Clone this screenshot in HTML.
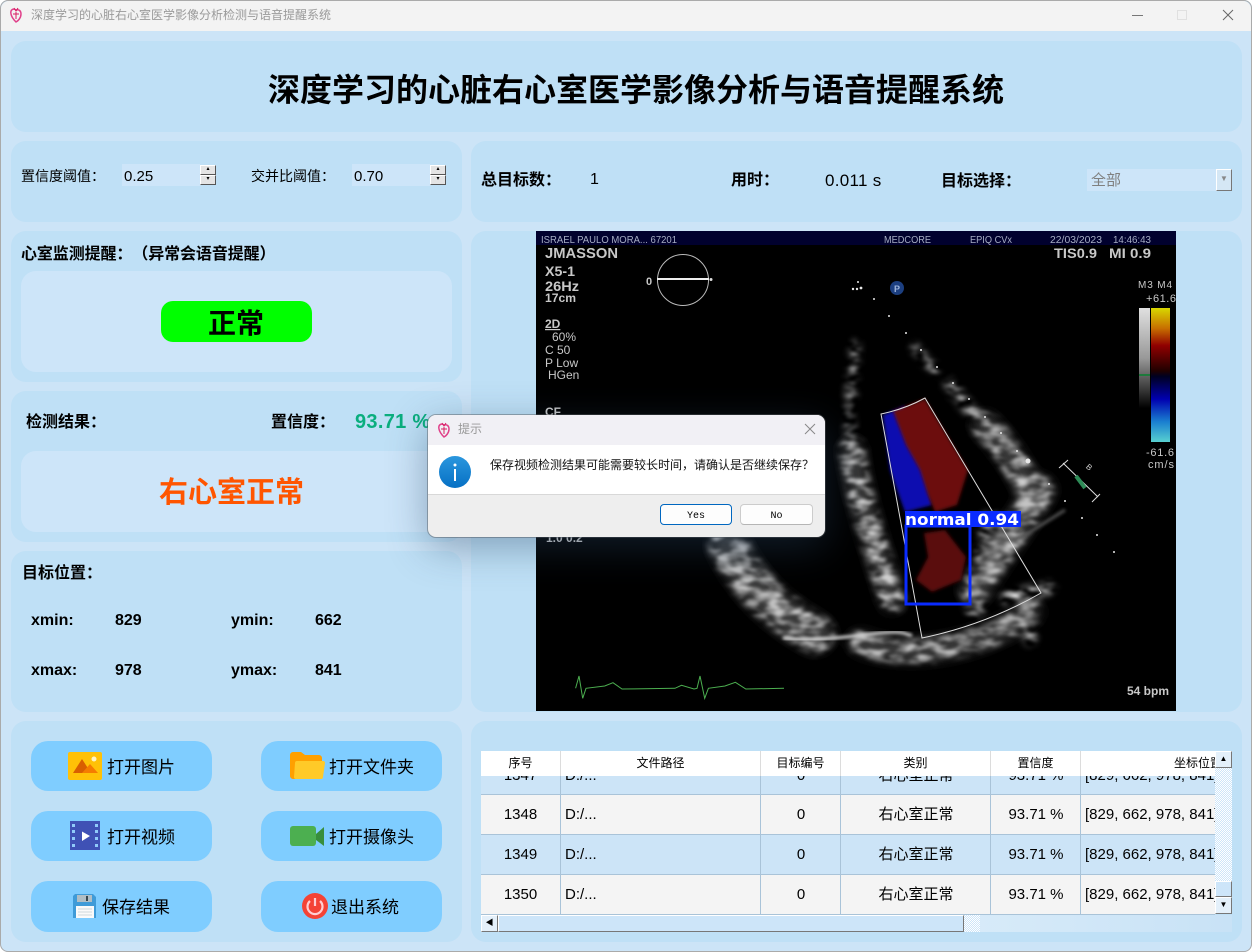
<!DOCTYPE html>
<html lang="zh-CN">
<head>
<meta charset="utf-8">
<title>深度学习的心脏右心室医学影像分析检测与语音提醒系统</title>
<style>
html,body{margin:0;padding:0;width:1252px;height:952px;overflow:hidden;background:#fff;font-family:"Liberation Sans","Noto Sans CJK SC",sans-serif;color:#000;text-spacing-trim:space-all}
#win{position:absolute;left:0;top:0;width:1252px;height:952px;background:#cce4f7;border-radius:8px;overflow:hidden;box-shadow:inset 0 0 0 1px #aaa}
.p{position:absolute;background:#bfe0f6;border-radius:15px}
.in{position:absolute;background:#cde5f9;border-radius:15px}
.t{position:absolute;white-space:nowrap;line-height:1}
.b{font-weight:bold}
.k{font-family:"Noto Sans CJK TC",sans-serif}
.btn{position:absolute;width:181px;height:50px;background:#7fcdff;border-radius:17px}
.ipt{position:absolute;background:#cde5f9;height:22px}
.sp{position:absolute;width:16px;height:10px;box-sizing:border-box;background:#e4e4e4;border:1px solid;border-color:#fff #555 #555 #fff;font-size:6px;line-height:7px;text-align:center;color:#000}
.hd{position:absolute;top:751px;height:25px;background:#fff;font-size:12px;line-height:25px;text-align:center;box-sizing:border-box;border-right:1px solid #dcdcdc;overflow:hidden}
.c{position:absolute;font-size:15px;line-height:40px;height:39px;white-space:nowrap;text-align:center;overflow:hidden}
.rw{position:absolute;left:481px;width:734px}
.vl{position:absolute;width:1px;top:776px;height:139px;background:#a9c3d8}
.sb{position:absolute;box-sizing:border-box;background:#cde5f9;border:1px solid;border-color:#fff #777 #777 #fff}
.dither{position:absolute;background:repeating-conic-gradient(#fff 0 25%,#cde5f9 0 50%) 0 0/2px 2px}
svg{position:absolute;overflow:visible}
svg text{font-family:"Liberation Sans",sans-serif}
</style>
</head>
<body>
<div id="win">
<!-- title bar -->
<div style="position:absolute;left:1px;top:1px;width:1250px;height:30px;background:#f3f3f3;border-radius:8px 8px 0 0"></div>
<svg style="left:9px;top:7px" width="14" height="17" viewBox="0 0 14 17"><path d="M7 3C4 1 1 3 2 7c.5 3 3 6 5 8 2-1 5-4 5-8 0-3-2-5-5-4z" fill="none" stroke="#e0408a" stroke-width="1.500"/><path d="M5 1l2 3 2-3M4 7h6M7 5v7" fill="none" stroke="#d81b60" stroke-width="1"/></svg>
<div class="t" style="left:31px;top:9px;font-size:12px;color:#9a9a9a">深度学习的心脏右心室医学影像分析检测与语音提醒系统</div>
<svg style="left:1125px;top:5px" width="115" height="20" viewBox="0 0 115 20"><path d="M7 10.500h11" stroke="#777" stroke-width="1"/><rect x="52.500" y="5.500" width="9" height="9" fill="none" stroke="#e0e0e0"/><path d="M98 5l10 10M108 5l-10 10" stroke="#666" stroke-width="1"/></svg>

<!-- panels -->
<div class="p" style="left:11px;top:41px;width:1231px;height:91px"></div>
<div class="t b" style="left:268px;top:74px;font-size:32px">深度学习的心脏右心室医学影像分析与语音提醒系统</div>

<div class="p" style="left:11px;top:141px;width:451px;height:81px"></div>
<div class="t" style="left:21px;top:169px;font-size:14px">置信度阈值<span class="k">：</span></div>
<div class="ipt" style="left:122px;top:164px;width:78px"></div>
<div class="t" style="left:124px;top:169px;font-size:15px">0.25</div>
<div class="sp" style="left:200px;top:165px">▴</div><div class="sp" style="left:200px;top:175px">▾</div>
<div class="t" style="left:251px;top:169px;font-size:14px">交并比阈值<span class="k">：</span></div>
<div class="ipt" style="left:352px;top:164px;width:78px"></div>
<div class="t" style="left:354px;top:169px;font-size:15px">0.70</div>
<div class="sp" style="left:430px;top:165px">▴</div><div class="sp" style="left:430px;top:175px">▾</div>

<div class="p" style="left:471px;top:141px;width:771px;height:81px"></div>
<div class="t b" style="left:481px;top:170px;font-size:16px">总目标数<span class="k">：</span></div>
<div class="t" style="left:590px;top:172px;font-size:16px">1</div>
<div class="t b" style="left:731px;top:170px;font-size:16px">用时<span class="k">：</span></div>
<div class="t" style="left:825px;top:172px;font-size:17px;letter-spacing:.3px">0.011 s</div>
<div class="t b" style="left:941px;top:171px;font-size:16px">目标选择<span class="k">：</span></div>
<div class="ipt" style="left:1087px;top:169px;width:129px"></div>
<div class="t" style="left:1091px;top:173px;font-size:15px;color:#808080">全部</div>
<div class="sb" style="left:1216px;top:169px;width:16px;height:22px;background:#d5e7f5;color:#888;font-size:8px;line-height:18px;text-align:center">▼</div>

<div class="p" style="left:11px;top:231px;width:451px;height:151px"></div>
<div class="t b" style="left:21px;top:244px;font-size:16px;letter-spacing:-.1px">心室监测提醒<span class="k">：</span>（异常会语音提醒）</div>
<div class="in" style="left:21px;top:271px;width:431px;height:101px"></div>
<div style="position:absolute;left:161px;top:301px;width:151px;height:41px;background:#00ff00;border-radius:12px"></div>
<div class="t b" style="left:208px;top:310px;font-size:28px">正常</div>

<div class="p" style="left:11px;top:391px;width:451px;height:151px"></div>
<div class="t b" style="left:26px;top:412px;font-size:16px">检测结果<span class="k">：</span></div>
<div class="t b" style="left:271px;top:412px;font-size:16px">置信度<span class="k">：</span></div>
<div class="t b" style="left:355px;top:412px;font-size:20px;color:#0aae7e;letter-spacing:.3px">93.71 %</div>
<div class="in" style="left:21px;top:451px;width:431px;height:81px"></div>
<div class="t b" style="left:159px;top:479px;font-size:29px;color:#ff5500">右心室正常</div>

<div class="p" style="left:11px;top:551px;width:451px;height:161px"></div>
<div class="t b" style="left:22px;top:563px;font-size:16px">目标位置<span class="k">：</span></div>
<div class="t b" style="left:31px;top:613px;font-size:16px">xmin:</div>
<div class="t b" style="left:115px;top:613px;font-size:16px">829</div>
<div class="t b" style="left:231px;top:613px;font-size:16px">ymin:</div>
<div class="t b" style="left:315px;top:613px;font-size:16px">662</div>
<div class="t b" style="left:31px;top:663px;font-size:16px">xmax:</div>
<div class="t b" style="left:115px;top:663px;font-size:16px">978</div>
<div class="t b" style="left:231px;top:663px;font-size:16px">ymax:</div>
<div class="t b" style="left:315px;top:663px;font-size:16px">841</div>

<!-- image panel -->
<div class="p" style="left:471px;top:231px;width:771px;height:481px"></div>
<svg style="left:536px;top:231px;overflow:hidden" width="640" height="480" viewBox="536 231 640 480">
<defs>
<filter id="sp" filterUnits="userSpaceOnUse" x="536" y="231" width="640" height="480">
<feGaussianBlur in="SourceGraphic" stdDeviation="3.500" result="b"/>
<feTurbulence type="fractalNoise" baseFrequency=".06 .12" numOctaves="2" seed="7"/>
<feColorMatrix values="0 0 0 0 1 0 0 0 0 1 0 0 0 0 1 2.800 0 0 0 -1" result="n"/>
<feComposite in="b" in2="n" operator="in"/>
<feGaussianBlur stdDeviation="1.400"/>
</filter>
<filter id="bl"><feGaussianBlur stdDeviation="1.500"/></filter>
<filter id="bs" filterUnits="userSpaceOnUse" x="536" y="231" width="640" height="480"><feGaussianBlur stdDeviation="6"/></filter>
<linearGradient id="gb" x1="0" y1="0" x2="0" y2="1"><stop offset="0" stop-color="#e0e0e0"/><stop offset=".5" stop-color="#999"/><stop offset="1" stop-color="#000"/></linearGradient>
<linearGradient id="cb" x1="0" y1="0" x2="0" y2="1"><stop offset="0" stop-color="#d8d800"/><stop offset=".15" stop-color="#c87000"/><stop offset=".28" stop-color="#900000"/><stop offset=".47" stop-color="#200000"/><stop offset=".51" stop-color="#000020"/><stop offset=".68" stop-color="#0000b0"/><stop offset=".85" stop-color="#1a80d0"/><stop offset="1" stop-color="#58d0d0"/></linearGradient>
</defs>
<rect x="536" y="231" width="640" height="480" fill="#000"/>
<rect x="536" y="231" width="640" height="14" fill="#01012e"/>
<!-- smooth tissue base -->
<g filter="url(#bs)" fill="none" stroke-linecap="round" stroke="#3a3a3a">
<path d="M728 545C748 585 775 612 815 634" stroke-width="34"/>
<path d="M860 642C905 662 985 648 1030 612" stroke-width="20"/>
<path d="M852 450C858 500 880 560 892 600" stroke-width="20"/>
<path d="M985 425C1005 445 1020 470 1030 490" stroke-width="22"/>
<path d="M1040 490C1020 525 995 555 975 590" stroke-width="26"/>
</g>
<!-- gray tissue -->
<g filter="url(#sp)" fill="none" stroke-linecap="round">
<path d="M728 545C748 585 775 612 815 634" stroke="#c4c4c4" stroke-width="38"/>
<path d="M860 642C905 662 985 648 1030 612" stroke="#c0c0c0" stroke-width="22"/>
<path d="M856 345C850 390 848 420 852 450" stroke="#999" stroke-width="10"/>
<path d="M852 450C858 500 880 560 892 600" stroke="#d0d0d0" stroke-width="24"/>
<path d="M950 385C965 405 975 415 985 425" stroke="#aaa" stroke-width="12"/>
<path d="M985 425C1005 445 1020 470 1030 490" stroke="#ccc" stroke-width="26"/>
<path d="M1040 490C1020 525 995 555 975 590" stroke="#c4c4c4" stroke-width="28"/>
<path d="M990 520L975 610" stroke="#a0a0a0" stroke-width="18"/>
<path d="M1007 598L1049 588" stroke="#eee" stroke-width="12"/>
<path d="M1030 605V638" stroke="#aaa" stroke-width="14"/>
<path d="M915 348L935 370" stroke="#ccc" stroke-width="8"/>
</g>
<path d="M783 638C820 642 850 636 880 633S905 636 912 635" fill="none" stroke="#ddd" stroke-width="3" filter="url(#bl)"/>
<path d="M1065 510L1022 537" stroke="#555" stroke-width="3" filter="url(#bl)"/>
<!-- color flow -->
<path d="M883 415L905 406L925 470L932 505L905 512L890 470Z" fill="#1010b0" filter="url(#bl)"/>
<path d="M893 411L925 399L968 470L957 505L935 512L928 495L920 470L906 445Z" fill="#6c0c08" filter="url(#bl)"/>
<path d="M924 533L945 530L966 557L961 580L932 592L916 580L928 557Z" fill="#5a0808" filter="url(#bl)"/>
<!-- sector outline -->
<path d="M881 414Q905 409 925 398L1041 593Q985 625 922 638Z" fill="none" stroke="#ddd" stroke-width="1"/>
<!-- dots -->
<g fill="#e8e8e8"><circle cx="858" cy="282" r="1"/><circle cx="874" cy="299" r="1"/><circle cx="889" cy="316" r="1"/><circle cx="906" cy="333" r="1"/><circle cx="921" cy="350" r="1"/><circle cx="937" cy="367" r="1"/><circle cx="953" cy="383" r="1"/><circle cx="969" cy="399" r="1"/><circle cx="985" cy="417" r="1"/><circle cx="1001" cy="433" r="1"/><circle cx="1017" cy="451" r="1"/><circle cx="1028" cy="461" r="2.500"/><circle cx="1049" cy="484" r="1"/><circle cx="1065" cy="501" r="1"/><circle cx="1082" cy="518" r="1"/><circle cx="1097" cy="535" r="1"/><circle cx="1114" cy="552" r="1"/><circle cx="853" cy="289" r="1.200"/><circle cx="857" cy="289" r="1.200"/><circle cx="861" cy="288" r="1.400"/></g>
<!-- marker -->
<path d="M1063 463L1098 497M1059 468L1068 460M1092 502L1100 494" stroke="#ddd" stroke-width="1" fill="none"/>
<path d="M1076 476L1085 488" stroke="#2e8b57" stroke-width="4"/>
<text x="1087" y="471" font-size="8" fill="#ccc" transform="rotate(40 1091 467)">B</text>
<!-- P badge -->
<circle cx="897" cy="288" r="7" fill="#1c3f80"/><text x="894" y="292" font-size="9" font-weight="bold" fill="#9fb6dd">P</text>
<!-- detection -->
<rect x="906" y="526" width="64" height="78" fill="none" stroke="#0a2bff" stroke-width="3"/>
<rect x="905" y="511" width="116" height="16" fill="#0a2bff"/>
<text x="905" y="525" font-size="16" font-weight="bold" fill="#fff" style="font-family:'DejaVu Sans',sans-serif" textLength="114" lengthAdjust="spacingAndGlyphs">normal 0.94</text>
<!-- header text -->
<g fill="#a6adc4" font-size="10">
<text x="541" y="243" textLength="136" lengthAdjust="spacingAndGlyphs">ISRAEL PAULO MORA... 67201</text>
<text x="884" y="243" textLength="47" lengthAdjust="spacingAndGlyphs">MEDCORE</text>
<text x="970" y="243" textLength="42" lengthAdjust="spacingAndGlyphs">EPIQ CVx</text>
<text x="1050" y="243" textLength="52" lengthAdjust="spacingAndGlyphs">22/03/2023</text>
<text x="1113" y="243" textLength="38" lengthAdjust="spacingAndGlyphs">14:46:43</text>
</g>
<g fill="#c8c8c8">
<text x="545" y="258" font-size="15" font-weight="bold" textLength="73" lengthAdjust="spacingAndGlyphs">JMASSON</text>
<text x="545" y="276" font-size="14" font-weight="bold" textLength="30" lengthAdjust="spacingAndGlyphs">X5-1</text>
<text x="545" y="291" font-size="14" font-weight="bold" textLength="34" lengthAdjust="spacingAndGlyphs">26Hz</text>
<text x="545" y="302" font-size="12" font-weight="bold" textLength="31" lengthAdjust="spacingAndGlyphs">17cm</text>
<text x="545" y="328" font-size="12" font-weight="bold" text-decoration="underline">2D</text>
<text x="552" y="341" font-size="12">60%</text>
<text x="545" y="354" font-size="12">C 50</text>
<text x="545" y="367" font-size="12">P Low</text>
<text x="548" y="379" font-size="12">HGen</text>
<text x="545" y="416" font-size="12" font-weight="bold">CF</text>
<text x="546" y="542" font-size="12" font-weight="bold">1.0  0.2</text>
<text x="646" y="285" font-size="11" font-weight="bold">0</text>
<text x="1054" y="258" font-size="14" font-weight="bold" textLength="43" lengthAdjust="spacingAndGlyphs">TIS0.9</text>
<text x="1109" y="258" font-size="14" font-weight="bold" textLength="42" lengthAdjust="spacingAndGlyphs">MI 0.9</text>
<text x="1138" y="288" font-size="10" textLength="34">M3  M4</text>
<text x="1146" y="302" font-size="11" textLength="30">+61.6</text>
<text x="1146" y="456" font-size="11" textLength="28">-61.6</text>
<text x="1148" y="468" font-size="11" textLength="26">cm/s</text>
<text x="1127" y="695" font-size="12" font-weight="bold" textLength="42" lengthAdjust="spacingAndGlyphs">54 bpm</text>
</g>
<circle cx="683" cy="280" r="25.500" fill="none" stroke="#bbb" stroke-width="1"/>
<path d="M657 279H709" stroke="#eee" stroke-width="2"/><circle cx="711" cy="279.500" r="1.500" fill="#ddd"/>
<rect x="1139" y="308" width="11" height="100" fill="url(#gb)"/>
<rect x="1139" y="374" width="11" height="2" fill="#1e7a3c"/>
<rect x="1151" y="308" width="19" height="134" fill="url(#cb)"/>
<path d="M575.600 688.300L579 676L582.700 698.300L586 688.300L604.700 686L613 682.700L622 689L675 688.300L681.500 685.300L694 689L697 688.300L700 676L704.700 698.300L708.400 688.300L725 686L735.400 682.300L745.800 689L784 688.300" fill="none" stroke="#4caf50" stroke-width="1"/>
</svg>

<!-- buttons panel -->
<div class="p" style="left:11px;top:721px;width:451px;height:221px"></div>
<div class="btn" style="left:31px;top:741px"></div>
<div class="btn" style="left:261px;top:741px"></div>
<div class="btn" style="left:31px;top:811px"></div>
<div class="btn" style="left:261px;top:811px"></div>
<div class="btn" style="left:31px;top:881px;height:51px"></div>
<div class="btn" style="left:261px;top:881px;height:51px"></div>
<div class="t" style="left:107px;top:759px;font-size:17px">打开图片</div>
<div class="t" style="left:329px;top:759px;font-size:17px">打开文件夹</div>
<div class="t" style="left:107px;top:829px;font-size:17px">打开视频</div>
<div class="t" style="left:329px;top:829px;font-size:17px">打开摄像头</div>
<div class="t" style="left:102px;top:899px;font-size:17px">保存结果</div>
<div class="t" style="left:331px;top:899px;font-size:17px">退出系统</div>
<svg style="left:0;top:0" width="1" height="1" viewBox="0 0 1 1">
<rect x="68" y="752" width="34" height="28" rx="2" fill="#ffc107"/>
<path d="M73 773L82 759L91 773Z" fill="#d95f00"/><path d="M82 773L90 764L98 773Z" fill="#f57c00"/><circle cx="94" cy="759" r="2.500" fill="#fff3c4"/>
<path d="M290 755a3 3 0 0 1 3-3h8l4 3h14a3 3 0 0 1 3 3v18a3 3 0 0 1-3 3h-26a3 3 0 0 1-3-3z" fill="#ffa000"/>
<path d="M297 761h26a2 2 0 0 1 2 2l-2 14a2 2 0 0 1-2 2h-25a2 2 0 0 1-2-2l1-14a2 2 0 0 1 2-2z" fill="#ffca28"/>
<rect x="70" y="821" width="30" height="29" fill="#3f51b5"/>
<g fill="#90caf9"><rect x="72" y="824" width="3" height="3"/><rect x="72" y="830" width="3" height="3"/><rect x="72" y="837" width="3" height="3"/><rect x="72" y="844" width="3" height="3"/><rect x="95" y="824" width="3" height="3"/><rect x="95" y="830" width="3" height="3"/><rect x="95" y="837" width="3" height="3"/><rect x="95" y="844" width="3" height="3"/></g>
<path d="M82 831.500V841L90 836Z" fill="#fff"/>
<rect x="290" y="826" width="26" height="20" rx="3" fill="#4caf50"/><path d="M316 834L324 827V846L316 840Z" fill="#388e3c"/>
<path d="M75 894h18l3 3v21H73v-22z" fill="#3f9bd8"/><rect x="77" y="895" width="15" height="7" fill="#b0bec5"/><rect x="86" y="896" width="2" height="5" fill="#37474f"/><rect x="76" y="906" width="18" height="12" fill="#fafafa"/><path d="M78 909h14M78 912h14M78 915h14" stroke="#cfd8dc" stroke-width="1"/>
<circle cx="315" cy="906" r="13" fill="#f44336"/><path d="M310 901a7.500 7.500 0 1 0 10 0" fill="none" stroke="#ffcdd2" stroke-width="2.200"/><path d="M315 898v8" stroke="#ffcdd2" stroke-width="2.200"/>
</svg>

<!-- table panel -->
<div class="p" style="left:471px;top:721px;width:771px;height:221px"></div>
<div class="rw" style="top:776px;height:18px;background:#cce4f7"></div>
<div class="rw" style="top:795px;height:39px;background:#f4f4f4"></div>
<div class="rw" style="top:835px;height:39px;background:#cce4f7"></div>
<div class="rw" style="top:875px;height:39px;background:#f4f4f4"></div>
<div class="rw" style="top:794px;height:1px;background:#a9c3d8"></div>
<div class="rw" style="top:834px;height:1px;background:#a9c3d8"></div>
<div class="rw" style="top:874px;height:1px;background:#a9c3d8"></div>
<div class="rw" style="top:914px;height:1px;background:#a9c3d8"></div>

<!-- rows -->
<div style="position:absolute;left:481px;top:0;width:734px;height:915px;overflow:hidden">
<div class="c" style="left:0;top:756px;width:79px">1347</div><div class="c" style="left:84px;top:756px">D:/...</div><div class="c" style="left:280px;top:756px;width:80px">0</div><div class="c" style="left:360px;top:756px;width:150px">右心室正常</div><div class="c" style="left:510px;top:756px;width:90px">93.71 %</div><div class="c" style="left:604px;top:756px;width:130px;text-align:left">[829, 662, 978, 841]</div>
<div class="c" style="left:0;top:795px;width:79px">1348</div><div class="c" style="left:84px;top:795px">D:/...</div><div class="c" style="left:280px;top:795px;width:80px">0</div><div class="c" style="left:360px;top:795px;width:150px">右心室正常</div><div class="c" style="left:510px;top:795px;width:90px">93.71 %</div><div class="c" style="left:604px;top:795px;width:130px;text-align:left">[829, 662, 978, 841]</div>
<div class="c" style="left:0;top:835px;width:79px">1349</div><div class="c" style="left:84px;top:835px">D:/...</div><div class="c" style="left:280px;top:835px;width:80px">0</div><div class="c" style="left:360px;top:835px;width:150px">右心室正常</div><div class="c" style="left:510px;top:835px;width:90px">93.71 %</div><div class="c" style="left:604px;top:835px;width:130px;text-align:left">[829, 662, 978, 841]</div>
<div class="c" style="left:0;top:875px;width:79px">1350</div><div class="c" style="left:84px;top:875px">D:/...</div><div class="c" style="left:280px;top:875px;width:80px">0</div><div class="c" style="left:360px;top:875px;width:150px">右心室正常</div><div class="c" style="left:510px;top:875px;width:90px">93.71 %</div><div class="c" style="left:604px;top:875px;width:130px;text-align:left">[829, 662, 978, 841]</div>
</div>
<div class="vl" style="left:560px"></div><div class="vl" style="left:760px"></div><div class="vl" style="left:840px"></div><div class="vl" style="left:990px"></div><div class="vl" style="left:1080px"></div>

<!-- header -->
<div class="hd" style="left:481px;width:80px">序号</div>
<div class="hd" style="left:561px;width:200px">文件路径</div>
<div class="hd" style="left:761px;width:80px">目标编号</div>
<div class="hd" style="left:841px;width:150px">类别</div>
<div class="hd" style="left:991px;width:90px">置信度</div>
<div class="hd" style="left:1081px;width:134px;border-right:0"><span style="position:absolute;left:93px;white-space:nowrap">坐标位置</span></div>

<!-- scrollbars -->
<div class="dither" style="left:1215px;top:768px;width:17px;height:113px"></div>
<div class="sb" style="left:1215px;top:751px;width:17px;height:17px;background:#e4f0fa;font-size:8px;line-height:14px;text-align:center">▲</div>
<div class="sb" style="left:1215px;top:881px;width:17px;height:16px"></div>
<div class="sb" style="left:1215px;top:897px;width:17px;height:17px;background:#e4f0fa;font-size:8px;line-height:14px;text-align:center">▼</div>
<div style="position:absolute;left:964px;top:915px;width:268px;height:17px;background:linear-gradient(90deg,#d8ebf9,#c8e2f6)"></div>
<div class="dither" style="left:964px;top:915px;width:16px;height:17px"></div>
<div class="sb" style="left:481px;top:915px;width:17px;height:17px;background:#e4f0fa;font-size:8px;line-height:14px;text-align:center">◀</div>
<div class="sb" style="left:498px;top:915px;width:466px;height:17px"></div>

<!-- dialog -->
<div style="position:absolute;left:428px;top:415px;width:397px;height:122px;border-radius:8px;box-shadow:0 10px 40px rgba(40,70,100,.42),0 0 0 1px rgba(90,90,90,.45);overflow:hidden;background:#eeeeee">
<div style="position:absolute;left:0;top:0;width:397px;height:30px;background:#f1f0f5"></div>
<div style="position:absolute;left:0;top:30px;width:397px;height:49px;background:#fff;border-bottom:1px solid #d8d8d8"></div>
<svg style="left:9px;top:7px" width="14" height="17" viewBox="0 0 14 17"><path d="M7 3C4 1 1 3 2 7c.5 3 3 6 5 8 2-1 5-4 5-8 0-3-2-5-5-4z" fill="none" stroke="#e0408a" stroke-width="1.500"/><path d="M5 1l2 3 2-3M4 7h6M7 5v7" fill="none" stroke="#d81b60" stroke-width="1"/></svg>
<div class="t" style="left:30px;top:8px;font-size:12px;color:#999">提示</div>
<svg style="left:376px;top:8px" width="12" height="12" viewBox="0 0 12 12"><path d="M1 1l10 10M11 1L1 11" stroke="#888" stroke-width="1"/></svg>
<svg style="left:11px;top:41px" width="32" height="32" viewBox="0 0 32 32"><defs><linearGradient id="ib" x1="0" y1="0" x2="0" y2="1"><stop offset="0" stop-color="#2b97de"/><stop offset="1" stop-color="#0670c4"/></linearGradient></defs><circle cx="16" cy="16" r="16" fill="url(#ib)"/><circle cx="16" cy="9" r="1.500" fill="#fff"/><rect x="15" y="13" width="2" height="12" fill="#fff"/></svg>
<div class="t" style="left:62px;top:44px;font-size:12px;color:#111">保存视频检测结果可能需要较长时间，请确认是否继续保存？</div>
<div style="position:absolute;left:232px;top:89px;width:72px;height:21px;box-sizing:border-box;border:1px solid #0067c0;border-radius:4px;background:#fdfdfd;font:10px/23px 'Liberation Mono',monospace;text-align:center">Yes</div>
<div style="position:absolute;left:312px;top:89px;width:73px;height:21px;box-sizing:border-box;border:1px solid #cccccc;border-bottom-color:#b5b5b5;border-radius:4px;background:#fdfdfd;font:10px/23px 'Liberation Mono',monospace;text-align:center">No</div>
</div>
</div>
</body>
</html>
